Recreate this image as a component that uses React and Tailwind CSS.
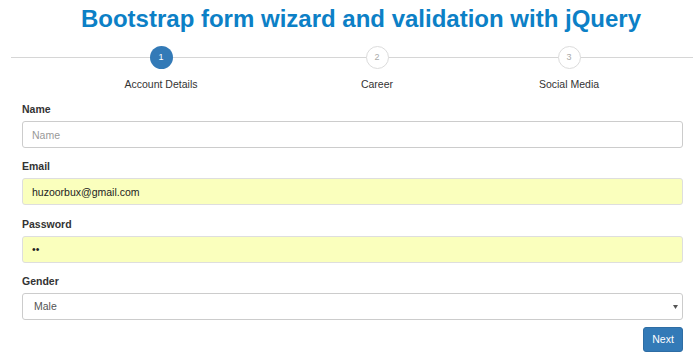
import React from "react";

function Step({ n, label, active, className }) {
  return (
    <div className={`flex w-[120px] flex-col items-center ${className || ""}`}>
      <div
        className={
          active
            ? "flex h-[23px] w-[23px] items-center justify-center rounded-full bg-[#337ab7] text-[9px] text-white"
            : "flex h-[23px] w-[23px] items-center justify-center rounded-full border border-[#dcdcdc] bg-white text-[9px] text-[#aaaaaa]"
        }
      >
        {n}
      </div>
      <div className="mt-[8px] text-[10.5px] leading-[15px] text-[#333333]">{label}</div>
    </div>
  );
}

function Field({ label, children, last }) {
  return (
    <div className={last ? "" : "mb-[11.3px]"}>
      <label className="mb-[4px] block text-[10.5px] font-bold leading-[15px] text-[#333333]">{label}</label>
      {children}
    </div>
  );
}

export default function App() {
  const inputBase =
    "block h-[27px] w-full rounded-[3px] border px-[9px] text-[10.5px] outline-none";
  return (
    <div className="h-[359px] w-[700px] overflow-hidden bg-white font-['Liberation_Sans',Arial,sans-serif] text-[#333333]">
      <div className="pl-[22px] pt-[6px]">
        <h1 className="text-center text-[24px] font-bold leading-[26px] text-[#0c80c6]">
          Bootstrap form wizard and validation with jQuery
        </h1>
      </div>

      <div className="relative ml-[11px] mt-[14px] w-[682px]">
        <div className="absolute left-0 right-0 top-[11px] h-[1px] bg-[#d6d6d6]" />
        <div className="relative flex">
          <Step n="1" label="Account Details" active className="ml-[90px]" />
          <Step n="2" label="Career" className="ml-[96px]" />
          <Step n="3" label="Social Media" className="ml-[72px]" />
        </div>
      </div>

      <form className="ml-[22px] mt-[10px] w-[661px]" onSubmit={(e) => e.preventDefault()}>
        <Field label="Name">
          <input
            type="text"
            placeholder="Name"
            className={`${inputBase} border-[#cccccc] bg-white text-[#555555] placeholder:text-[#999999]`}
          />
        </Field>
        <Field label="Email">
          <input
            type="text"
            defaultValue="huzoorbux@gmail.com"
            className={`${inputBase} border-[#dedede] bg-[#faffbd] text-[#222222]`}
          />
        </Field>
        <Field label="Password">
          <input
            type="password"
            defaultValue="ab"
            className={`${inputBase} border-[#dedede] bg-[#faffbd] text-[6px] text-[#222222]`}
          />
        </Field>
        <Field label="Gender" last>
          <div className="relative">
            <select
              defaultValue="Male"
              className={`${inputBase} appearance-none border-[#cccccc] bg-white pl-[11px] text-[#555555]`}
            >
              <option>Male</option>
              <option>Female</option>
            </select>
            <svg
              className="pointer-events-none absolute right-[5px] top-[12px]"
              width="5"
              height="4"
              viewBox="0 0 5 4"
            >
              <path d="M0 0 L5 0 L2.5 4 Z" fill="#555555" />
            </svg>
          </div>
        </Field>
        <div className="mt-[7px] flex justify-end">
          <button
            type="button"
            className="h-[25px] w-[40px] rounded-[3px] border border-[#2e6da4] bg-[#337ab7] text-[10.5px] text-white"
          >
            Next
          </button>
        </div>
      </form>
    </div>
  );
}
